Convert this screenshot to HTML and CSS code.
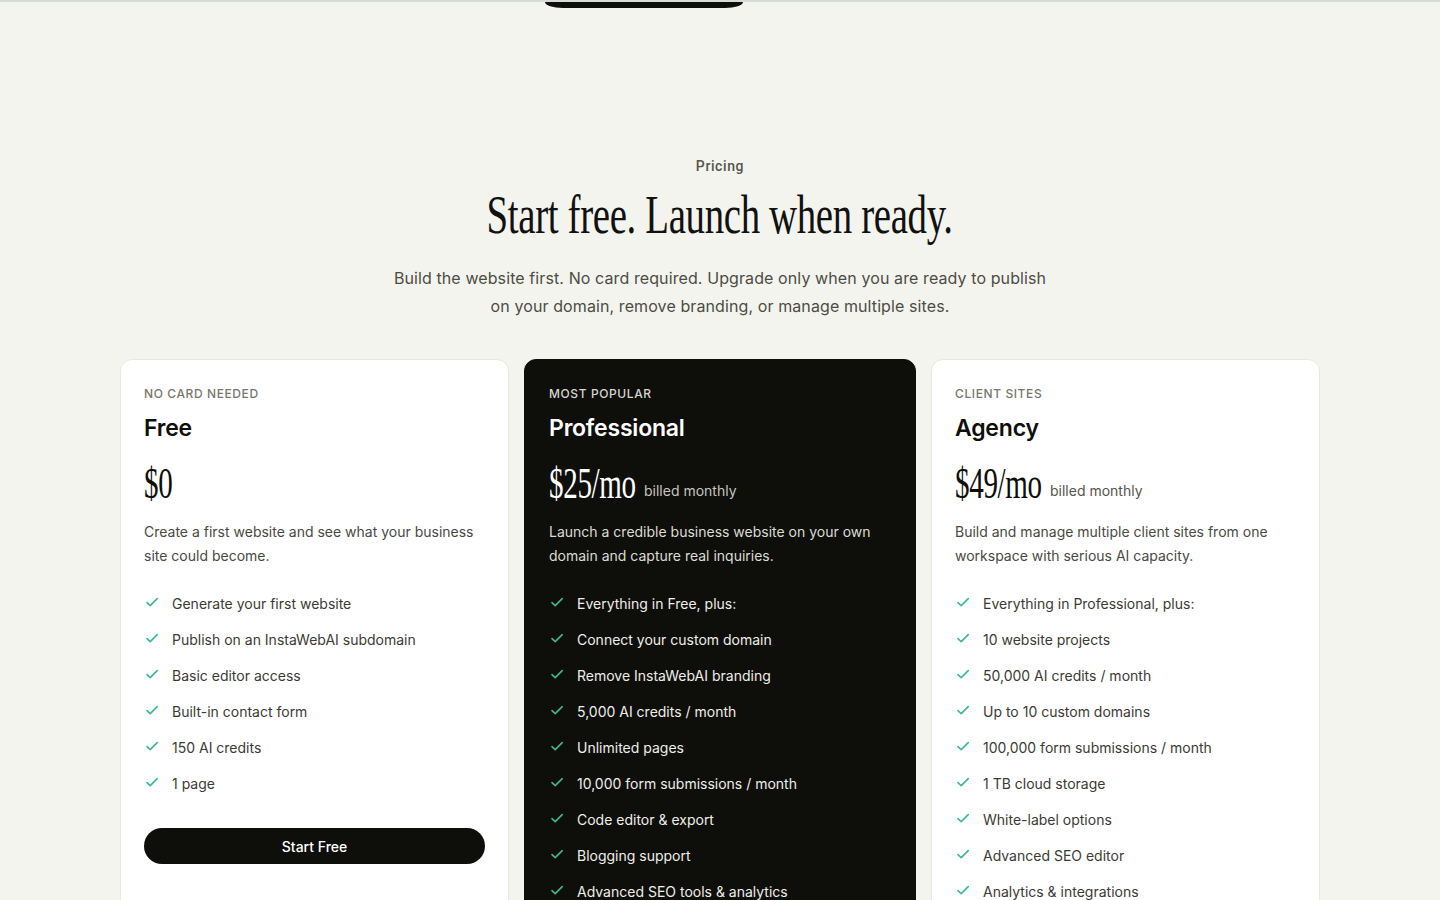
FILE: index.html
```html
<!DOCTYPE html>
<html lang="en">
<head>
<meta charset="utf-8">
<title>Pricing</title>
<link rel="stylesheet" href="styles.css">
</head>
<body>
<div class="top-rule"></div>
<div class="stub-row"><div class="pill-stub"></div></div>

<section class="pricing">
  <header class="pricing-head">
    <p class="eyebrow">Pricing</p>
    <h2 class="title"><span class="title-inner">Start free. Launch when ready.</span></h2>
    <p class="lede">Build the website first. No card required. Upgrade only when you are ready to publish on your domain, remove branding, or manage multiple sites.</p>
  </header>

  <div class="plans">
    <article class="plan">
      <p class="plan-tag">No card needed</p>
      <h3 class="plan-name">Free</h3>
      <p class="plan-price"><span class="amount amount-short">$0</span></p>
      <p class="plan-desc">Create a first website and see what your business site could become.</p>
      <ul class="features">
        <li><svg class="check" viewBox="0 0 16 16"><path d="M3 8.6l3.2 3L13.2 4.6"/></svg>Generate your first website</li>
        <li><svg class="check" viewBox="0 0 16 16"><path d="M3 8.6l3.2 3L13.2 4.6"/></svg>Publish on an InstaWebAI subdomain</li>
        <li><svg class="check" viewBox="0 0 16 16"><path d="M3 8.6l3.2 3L13.2 4.6"/></svg>Basic editor access</li>
        <li><svg class="check" viewBox="0 0 16 16"><path d="M3 8.6l3.2 3L13.2 4.6"/></svg>Built-in contact form</li>
        <li><svg class="check" viewBox="0 0 16 16"><path d="M3 8.6l3.2 3L13.2 4.6"/></svg>150 AI credits</li>
        <li><svg class="check" viewBox="0 0 16 16"><path d="M3 8.6l3.2 3L13.2 4.6"/></svg>1 page</li>
      </ul>
      <a class="btn" href="#">Start Free</a>
    </article>

    <article class="plan plan-dark">
      <p class="plan-tag">Most popular</p>
      <h3 class="plan-name">Professional</h3>
      <p class="plan-price"><span class="amount">$25/mo</span><span class="billing">billed monthly</span></p>
      <p class="plan-desc">Launch a credible business website on your own domain and capture real inquiries.</p>
      <ul class="features">
        <li><svg class="check" viewBox="0 0 16 16"><path d="M3 8.6l3.2 3L13.2 4.6"/></svg>Everything in Free, plus:</li>
        <li><svg class="check" viewBox="0 0 16 16"><path d="M3 8.6l3.2 3L13.2 4.6"/></svg>Connect your custom domain</li>
        <li><svg class="check" viewBox="0 0 16 16"><path d="M3 8.6l3.2 3L13.2 4.6"/></svg>Remove InstaWebAI branding</li>
        <li><svg class="check" viewBox="0 0 16 16"><path d="M3 8.6l3.2 3L13.2 4.6"/></svg>5,000 AI credits / month</li>
        <li><svg class="check" viewBox="0 0 16 16"><path d="M3 8.6l3.2 3L13.2 4.6"/></svg>Unlimited pages</li>
        <li><svg class="check" viewBox="0 0 16 16"><path d="M3 8.6l3.2 3L13.2 4.6"/></svg>10,000 form submissions / month</li>
        <li><svg class="check" viewBox="0 0 16 16"><path d="M3 8.6l3.2 3L13.2 4.6"/></svg>Code editor &amp; export</li>
        <li><svg class="check" viewBox="0 0 16 16"><path d="M3 8.6l3.2 3L13.2 4.6"/></svg>Blogging support</li>
        <li><svg class="check" viewBox="0 0 16 16"><path d="M3 8.6l3.2 3L13.2 4.6"/></svg>Advanced SEO tools &amp; analytics</li>
      </ul>
      <a class="btn btn-light" href="#">Start Professional</a>
    </article>

    <article class="plan">
      <p class="plan-tag">Client sites</p>
      <h3 class="plan-name">Agency</h3>
      <p class="plan-price"><span class="amount">$49/mo</span><span class="billing">billed monthly</span></p>
      <p class="plan-desc">Build and manage multiple client sites from one workspace with serious AI capacity.</p>
      <ul class="features">
        <li><svg class="check" viewBox="0 0 16 16"><path d="M3 8.6l3.2 3L13.2 4.6"/></svg>Everything in Professional, plus:</li>
        <li><svg class="check" viewBox="0 0 16 16"><path d="M3 8.6l3.2 3L13.2 4.6"/></svg>10 website projects</li>
        <li><svg class="check" viewBox="0 0 16 16"><path d="M3 8.6l3.2 3L13.2 4.6"/></svg>50,000 AI credits / month</li>
        <li><svg class="check" viewBox="0 0 16 16"><path d="M3 8.6l3.2 3L13.2 4.6"/></svg>Up to 10 custom domains</li>
        <li><svg class="check" viewBox="0 0 16 16"><path d="M3 8.6l3.2 3L13.2 4.6"/></svg>100,000 form submissions / month</li>
        <li><svg class="check" viewBox="0 0 16 16"><path d="M3 8.6l3.2 3L13.2 4.6"/></svg>1 TB cloud storage</li>
        <li><svg class="check" viewBox="0 0 16 16"><path d="M3 8.6l3.2 3L13.2 4.6"/></svg>White-label options</li>
        <li><svg class="check" viewBox="0 0 16 16"><path d="M3 8.6l3.2 3L13.2 4.6"/></svg>Advanced SEO editor</li>
        <li><svg class="check" viewBox="0 0 16 16"><path d="M3 8.6l3.2 3L13.2 4.6"/></svg>Analytics &amp; integrations</li>
      </ul>
      <a class="btn" href="#">Start Agency</a>
    </article>
  </div>
</section>
</body>
</html>
```

FILE: styles.css
```css
* { box-sizing: border-box; }

html, body {
  margin: 0;
  padding: 0;
  background: #f4f4ef;
  color: #111110;
  font-family: Inter, "Noto Sans", "Liberation Sans", sans-serif;
}

.top-rule {
  height: 2px;
  background: #d8dcd8;
}

.stub-row {
  height: 6px;
}

.pill-stub {
  margin-left: 545px;
  width: 198px;
  height: 6px;
  background: #0e0e0b;
  border-radius: 0 0 18px 18px / 0 0 6px 6px;
}

.pricing {
  padding: 148px 120px 80px;
}

.pricing-head {
  text-align: center;
}

.eyebrow {
  margin: 0;
  font-family: Roboto, Inter, sans-serif;
  font-size: 14px;
  line-height: 20px;
  font-weight: 500;
  letter-spacing: 0.6px;
  color: #55554b;
}

.title {
  margin: 11px 0 0;
  font-family: "Liberation Serif", serif;
  font-weight: 400;
  font-size: 54px;
  line-height: 57px;
  color: #111110;
}

.title-inner {
  display: inline-block;
  transform: scaleX(0.72);
  letter-spacing: -0.5px;
  white-space: nowrap;
}

.lede {
  margin: 20px auto 0;
  max-width: 660px;
  font-size: 16px;
  line-height: 28px;
  letter-spacing: 0.1px;
  color: #4c4c43;
}

.plans {
  margin-top: 39px;
  display: grid;
  grid-template-columns: 1fr 392px 1fr;
  gap: 15px;
  align-items: stretch;
}

.plan {
  background: #ffffff;
  border: 1px solid #e7e7e1;
  border-radius: 12px;
  padding: 26px 23px 32px;
}

.plan-dark {
  background: #0e0e0b;
  border-color: #0e0e0b;
  padding-left: 24px;
  padding-right: 24px;
}

.plan-tag {
  margin: 0;
  font-size: 12px;
  line-height: 16px;
  font-weight: 500;
  letter-spacing: 0.6px;
  text-transform: uppercase;
  color: #77776c;
}

.plan-dark .plan-tag {
  color: #d6d6cf;
}

.plan-name {
  margin: 10px 0 0;
  font-size: 23px;
  line-height: 32px;
  font-weight: 600;
  letter-spacing: -0.2px;
  color: #0e0e0b;
}

.plan-dark .plan-name {
  color: #ffffff;
}

.plan-price {
  margin: 16px 0 0;
  height: 48px;
  display: flex;
  align-items: flex-end;
}

.amount {
  display: inline-block;
  font-family: "Liberation Serif", serif;
  font-size: 44px;
  line-height: 48px;
  color: #0e0e0b;
  transform: scaleX(0.66);
  transform-origin: left center;
  margin-right: -0.92em;
  letter-spacing: -0.5px;
}

.amount-short {
  margin-right: -0.32em;
}

.plan-dark .amount {
  color: #ffffff;
}

.billing {
  margin-left: 4px;
  padding-bottom: 7px;
  font-size: 14px;
  line-height: 20px;
  color: #55554c;
}

.plan-dark .billing {
  color: #c6c6be;
}

.plan-desc {
  margin: 12px 0 0;
  font-size: 14px;
  line-height: 24px;
  color: #4a4a42;
}

.plan-dark .plan-desc {
  color: #dcdcd4;
}

.features {
  list-style: none;
  margin: 25px 0 0;
  padding: 0;
  display: flex;
  flex-direction: column;
  gap: 14px;
}

.features li {
  display: flex;
  align-items: flex-start;
  gap: 12px;
  font-size: 14px;
  line-height: 22px;
  color: #3b3b34;
}

.plan-dark .features li {
  color: #eeeee8;
}

.check {
  flex: 0 0 16px;
  width: 16px;
  height: 16px;
  margin-top: 1px;
  fill: none;
  stroke: #3bb98f;
  stroke-width: 1.6;
  stroke-linecap: round;
  stroke-linejoin: round;
}

.btn {
  display: flex;
  align-items: center;
  justify-content: center;
  margin-top: 33px;
  height: 36px;
  border-radius: 18px;
  background: #0e0e0b;
  color: #ffffff;
  font-family: Inter, Roboto, sans-serif;
  font-size: 14px;
  font-weight: 500;
  text-decoration: none;
}

.btn-light {
  background: #ffffff;
  color: #0e0e0b;
}
```
